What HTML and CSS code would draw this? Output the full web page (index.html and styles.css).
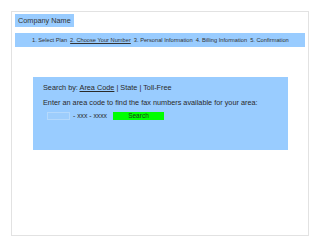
FILE: index.html
```html
<!DOCTYPE html>
<html>
<head>
<meta charset="utf-8">
<link rel="stylesheet" href="styles.css">
</head>
<body>
<div class="frame">
  <div class="brand">Company Name</div>
  <div class="steps">
    <span>1. Select Plan</span>
    <span class="cur">2. Choose Your Number</span>
    <span>3. Personal Information</span>
    <span>4. Billing Information</span>
    <span>5. Confirmation</span>
  </div>
  <div class="panel">
    <div class="by">Search by: <span class="u">Area Code</span> | State | Toll-Free</div>
    <div class="hint">Enter an area code to find the fax numbers available for your area:</div>
    <div class="row">
      <span class="code"></span>
      <span class="mask">- xxx - xxxx</span>
      <span class="btn">Search</span>
    </div>
  </div>
</div>
</body>
</html>
```
FILE: styles.css
```css
html, body { margin: 0; padding: 0; background: #fff; }
body { padding: 11px; font-family: "Liberation Sans", Arial, sans-serif; color: #2a2a2a; }
.frame {
  box-sizing: border-box;
  width: 298px;
  height: 225px;
  border: 1px solid #e2e2e2;
  padding: 2px 3px 0 3px;
}
.brand {
  width: fit-content;
  background: #99ccff;
  font-size: 7.3px;
  line-height: 13px;
  padding: 0 3px;
  color: #333;
}
.steps {
  margin-top: 6px;
  background: #99ccff;
  height: 14px;
  line-height: 14px;
  font-size: 5.7px;
  padding-left: 17px;
  white-space: nowrap;
  display: flex;
  gap: 3px;
  color: #333;
}
.steps .cur { text-decoration: underline; }
.panel {
  margin: 30px 0 0 18px;
  width: 255px;
  height: 73px;
  box-sizing: border-box;
  background: #99ccff;
  padding: 5px 0 0 10px;
  font-size: 7.3px;
  color: #2a2a2a;
}
.u { text-decoration: underline; }
.by { line-height: 11px; }
.hint { margin-top: 4px; line-height: 11px; }
.row {
  margin-top: 3px;
  display: flex;
  align-items: center;
  height: 9px;
}
.code {
  width: 21px;
  height: 6px;
  border: 1px solid #b5d9fc;
  background: #9dcdfc;
  margin-left: 4px;
}
.mask { margin-left: 3px; font-size: 6.8px; }
.btn {
  margin-left: 6px;
  width: 51px;
  height: 8px;
  background: #00ff00;
  font-size: 6.5px;
  line-height: 8px;
  text-align: center;
  color: #1a3a1a;
}
```
